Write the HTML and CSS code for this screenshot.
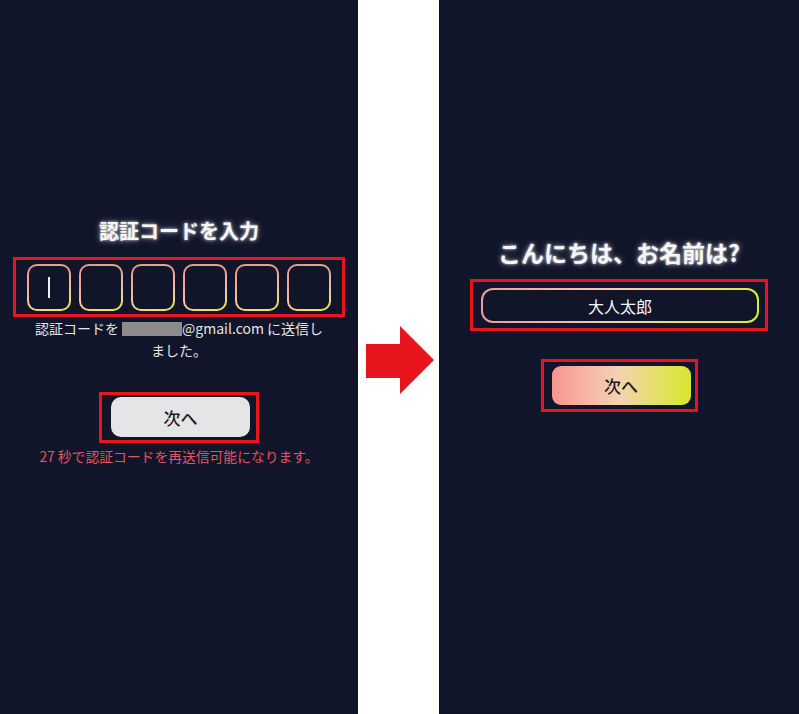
FILE: index.html
```html
<!DOCTYPE html>
<html lang="ja">
<head>
    <meta charset="UTF-8">
    <meta name="viewport" content="width=device-width, initial-scale=1.0">
    <title>認証コードと名前の入力</title>
    <link rel="stylesheet" href="styles.css">
</head>
<body>

<div class="board">
    <!-- 左: 認証コード入力 -->
    <div class="screen screen-code">
        <h1 class="title">認証コードを入力</h1>

        <div class="mark mark-code">
            <div class="cell"><span class="caret"></span></div>
            <div class="cell"></div>
            <div class="cell"></div>
            <div class="cell"></div>
            <div class="cell"></div>
            <div class="cell"></div>
        </div>

        <p class="caption">認証コードを <span class="redact"></span>@gmail.com に送信しました。</p>

        <div class="mark mark-next">
            <button class="next next-gray">次へ</button>
        </div>

        <p class="resend">27 秒で認証コードを再送信可能になります。</p>
    </div>

    <!-- 中央: 矢印 -->
    <div class="gap">
        <svg class="arrow" width="68" height="68" viewBox="0 0 68 68">
            <polygon points="0,18 34,18 34,0 68,34 34,68 34,52 0,52" fill="#e8141e"/>
        </svg>
    </div>

    <!-- 右: 名前入力 -->
    <div class="screen screen-name">
        <h1 class="title title-big">こんにちは、お名前は?</h1>

        <div class="mark mark-input">
            <div class="name-field">大人太郎</div>
        </div>

        <div class="mark mark-next2">
            <button class="next next-grad">次へ</button>
        </div>
    </div>
</div>

</body>
</html>
```

FILE: styles.css
```css
body {
    margin: 0;
    background-color: #ffffff;
    font-family: "Noto Sans CJK JP", "Noto Sans", sans-serif;
}

.board {
    display: flex;
    width: 799px;
    height: 714px;
}

.screen {
    background-color: #11152a;
    height: 714px;
    display: flex;
    flex-direction: column;
    align-items: center;
    box-sizing: border-box;
}

.screen-code {
    width: 358px;
    padding-top: 219px;
}

.screen-name {
    width: 360px;
    padding-top: 238px;
    box-shadow: inset 1px 0 1px rgba(0, 0, 0, 0.25);
}

.gap {
    width: 81px;
    display: flex;
    align-items: center;
    justify-content: center;
}

.arrow {
    display: block;
    margin-left: 3px;
    margin-top: 6px;
}

.title {
    margin: 0;
    color: #f6f6f6;
    font-size: 20px;
    line-height: 24px;
    font-weight: 700;
    text-shadow: 0 0 3px rgba(255, 255, 255, 0.8), 0 0 7px rgba(255, 255, 255, 0.45);
}

.title-big {
    font-size: 23px;
    line-height: 28px;
}

/* 赤い枠 */
.mark {
    border: 3px solid #e8141e;
    box-sizing: border-box;
    display: flex;
}

.mark-code {
    width: 332px;
    height: 60px;
    margin-top: 14px;
    justify-content: center;
    align-items: center;
    gap: 8px;
}

.cell {
    width: 44px;
    height: 47px;
    box-sizing: border-box;
    border: 2.5px solid transparent;
    border-radius: 10px;
    background: linear-gradient(#11152a, #11152a) padding-box,
                linear-gradient(165deg, #f0948c 0%, #f2aa9c 40%, #f2c89a 70%, #e4ee3a 100%) border-box;
    display: flex;
    align-items: center;
    justify-content: center;
}

.caret {
    width: 2px;
    height: 21px;
    background-color: #f2f2f2;
}

.caption {
    width: 290px;
    margin: 0;
    color: #e4e4e4;
    font-size: 14px;
    line-height: 22px;
    text-align: center;
}

.redact {
    display: inline-block;
    width: 60px;
    height: 14px;
    background-color: #8c8c8c;
    vertical-align: -2px;
}

.mark-next {
    width: 160px;
    height: 51px;
    margin-top: 31px;
    padding: 2px 6px 3px 9px;
}

.next {
    width: 100%;
    height: 100%;
    border: none;
    border-radius: 10px;
    font-family: "Noto Sans CJK JP", sans-serif;
    font-size: 17px;
    font-weight: 500;
    color: #1c1c1c;
    cursor: pointer;
}

.next-gray {
    background-color: #e5e5e7;
}

.resend {
    margin: 4px 0 0;
    color: #ea5060;
    font-size: 13.8px;
    line-height: 18px;
}

.mark-input {
    width: 298px;
    height: 52px;
    margin-top: 13px;
    padding: 6px 6px 5px 8px;
}

.name-field {
    flex: 1;
    box-sizing: border-box;
    border: 2.5px solid transparent;
    border-radius: 12px;
    background: linear-gradient(#11152a, #11152a) padding-box,
                linear-gradient(90deg, #f09c98 0%, #f4d0b4 50%, #dcee34 100%) border-box;
    color: #f4f4f4;
    font-size: 16px;
    display: flex;
    align-items: center;
    justify-content: center;
}

.mark-next2 {
    width: 157px;
    height: 53px;
    margin-top: 28px;
    padding: 4px 4px 4px 8px;
}

.next-grad {
    border-radius: 9px;
    background: linear-gradient(90deg, #f7948e 0%, #f7b6a6 25%, #f4d2b2 48%, #e4e160 78%, #d4e82e 100%);
}
```
